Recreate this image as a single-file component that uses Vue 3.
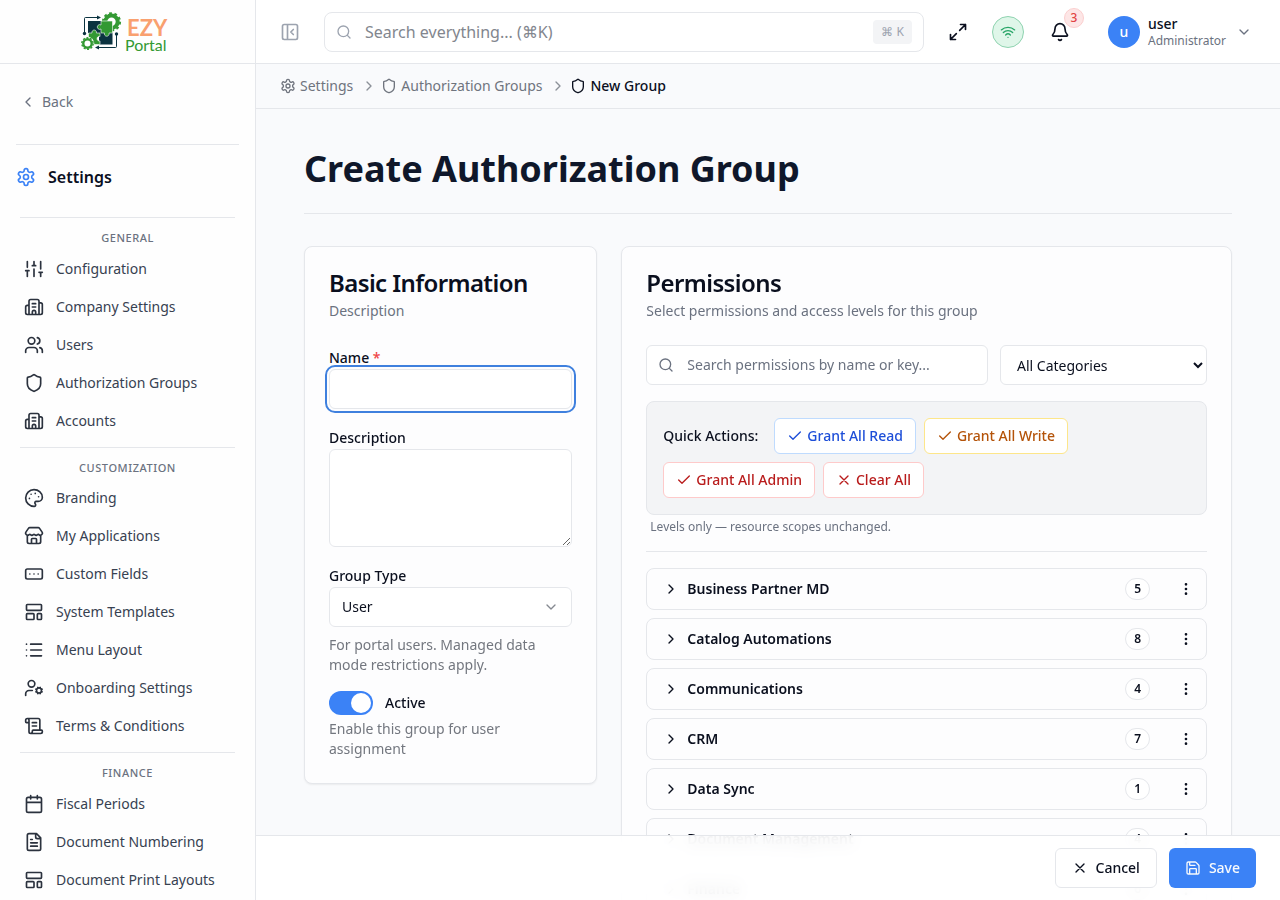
<template>
  <div class="shell">
    <aside class="sidebar">
      <a href="#" class="brand" aria-label="EZY Portal">
        <svg class="brand-logo" viewBox="80 10 90 44" width="90" height="44" aria-hidden="true">
          <g fill="none" stroke="#0b3340" stroke-width="1">
            <path d="M84.500 32V18.500a1 1 0 0 1 1-1H98" />
            <path d="M116.500 35V46.500a1 1 0 0 1-1 1H98" />
          </g>
          <path d="M97 15.500l4 2-4 2z M99 45.500l-4 2 4 2z" fill="#0b3340" />
          <circle cx="84.500" cy="33.500" r="1.700" fill="#0b3340" />
          <circle cx="116.500" cy="34" r="1.700" fill="#0b3340" />
          <rect x="88" y="21" width="13" height="12" fill="#0b3340" />
          <rect x="99" y="32" width="13.500" height="12.500" fill="#0b3340" />
          <circle cx="111.500" cy="21.800" r="6.200" fill="#fff" stroke="#339933" stroke-width="4" />
          <circle cx="111.500" cy="21.800" r="8.600" fill="none" stroke="#339933" stroke-width="2" stroke-dasharray="2.800 2.604" />
          <path
            d="M101 21h11.500v12h-3.500a2.400 2.400 0 1 1-4.500 0H101v-4a2.400 2.400 0 1 1 0-4z"
            fill="#339933"
            stroke="#fff"
            stroke-width="0.600"
          />
          <path
            d="M88.500 33h3.500a2.300 2.300 0 1 1 4.400 0H100v3.500a2.300 2.300 0 1 0 0 4.400V44.500H88.500z"
            fill="#339933"
            stroke="#fff"
            stroke-width="0.600"
          />
          <circle cx="87.500" cy="43.500" r="6.800" fill="#fff" />
          <circle cx="87.500" cy="43.500" r="4.200" fill="#fff" stroke="#339933" stroke-width="2.400" />
          <circle cx="87.500" cy="43.500" r="5.700" fill="none" stroke="#339933" stroke-width="1.400" stroke-dasharray="2 1.581" />
          <text x="127" y="36" class="logo-top">EZY</text>
          <text x="125" y="51" class="logo-bottom">Portal</text>
        </svg>
      </a>

      <div class="sidebar-body">
        <a href="#" class="back-link"><Icon name="chevronLeft" :size="16" />Back</a>

        <div class="module-title"><Icon name="settings" :size="20" />Settings</div>

        <nav class="nav" aria-label="Settings">
          <section v-for="section in sections" :key="section.title" class="nav-section">
            <h3 class="nav-heading">{{ section.title }}</h3>
            <a v-for="item in section.items" :key="item.label" href="#" class="nav-item">
              <Icon :name="item.icon" :size="20" />{{ item.label }}
            </a>
          </section>
        </nav>
      </div>
    </aside>

    <div class="content">
      <header class="topbar">
        <button class="icon-btn toggle" aria-label="Collapse sidebar"><Icon name="panel" :size="20" /></button>
        <label class="global-search">
          <Icon name="search" :size="16" />
          <input v-model="globalQuery" type="text" placeholder="Search everything... (⌘K)" aria-label="Search everything" />
          <kbd>⌘ K</kbd>
        </label>
        <div class="topbar-actions">
          <button class="icon-btn" aria-label="Full screen"><Icon name="maximize" :size="20" /></button>
          <button class="status-btn" aria-label="Online"><Icon name="wifi" :size="16" /></button>
          <button class="icon-btn bell" aria-label="Notifications">
            <Icon name="bell" :size="20" />
            <span class="bell-count">3</span>
          </button>
          <button class="user-menu">
            <span class="avatar">u</span>
            <span class="user-text">
              <span class="user-name">user</span>
              <span class="user-role">Administrator</span>
            </span>
            <Icon name="chevronDown" :size="16" />
          </button>
        </div>
      </header>

      <nav class="breadcrumb" aria-label="Breadcrumb">
        <a href="#" class="crumb"><Icon name="settings" :size="16" />Settings</a>
        <Icon name="chevronRight" :size="16" class="crumb-sep" />
        <a href="#" class="crumb"><Icon name="shield" :size="16" />Authorization Groups</a>
        <Icon name="chevronRight" :size="16" class="crumb-sep" />
        <span class="crumb current" aria-current="page"><Icon name="shield" :size="16" />New Group</span>
      </nav>

      <main class="page">
        <h1 class="page-title">Create Authorization Group</h1>

        <form id="group-form" class="columns" @submit.prevent>
          <section class="card basic">
            <h2>Basic Information</h2>
            <p class="card-desc">Description</p>

            <div class="fields">
              <div class="field">
                <label for="name">Name <span class="required">*</span></label>
                <input id="name" ref="nameInput" v-model="form.name" type="text" class="control" />
              </div>
              <div class="field">
                <label for="description">Description</label>
                <textarea id="description" v-model="form.description" class="control"></textarea>
              </div>
              <div class="field">
                <label for="type">Group Type</label>
                <div class="select-wrap">
                  <select id="type" v-model="form.type" class="control">
                    <option>User</option>
                    <option>Service</option>
                  </select>
                  <Icon name="chevronDown" :size="16" />
                </div>
                <p class="help">For portal users. Managed data mode restrictions apply.</p>
              </div>
              <div class="active-field">
                <label class="switch">
                  <input v-model="form.active" type="checkbox" role="switch" />
                  Active
                </label>
                <p>Enable this group for user assignment</p>
              </div>
            </div>
          </section>

          <section class="card permissions">
            <h2>Permissions</h2>
            <p class="card-desc">Select permissions and access levels for this group</p>

            <div class="filters">
              <label class="perm-search">
                <Icon name="search" :size="16" />
                <input v-model="query" type="text" placeholder="Search permissions by name or key..." aria-label="Search permissions" />
              </label>
              <select v-model="category" class="category" aria-label="Category">
                <option>All Categories</option>
                <option v-for="group in groups" :key="group.name">{{ group.name }}</option>
              </select>
            </div>

            <div class="quick">
              <span class="quick-label">Quick Actions:</span>
              <button type="button" class="quick-btn read"><Icon name="check" :size="16" />Grant All Read</button>
              <button type="button" class="quick-btn write"><Icon name="check" :size="16" />Grant All Write</button>
              <button type="button" class="quick-btn admin"><Icon name="check" :size="16" />Grant All Admin</button>
              <button type="button" class="quick-btn admin"><Icon name="x" :size="16" />Clear All</button>
            </div>
            <p class="quick-note">Levels only — resource scopes unchanged.</p>

            <ul class="groups">
              <li v-for="group in groups" :key="group.name" class="group">
                <button type="button" class="group-toggle">
                  <Icon name="chevronRight" :size="16" />
                  <span class="group-name">{{ group.name }}</span>
                  <span class="count">{{ group.count }}</span>
                </button>
                <button type="button" class="group-menu" :aria-label="`${group.name} options`">
                  <Icon name="dots" :size="16" />
                </button>
              </li>
            </ul>
          </section>
        </form>
      </main>

      <footer class="action-bar">
        <button type="button" class="btn"><Icon name="x" :size="16" />Cancel</button>
        <button type="submit" form="group-form" class="btn primary"><Icon name="save" :size="16" />Save</button>
      </footer>
    </div>
  </div>
</template>

<script setup>
import { h, onMounted, reactive, ref } from 'vue';

const icons = {
  settings:
    'M12.22 2h-.44a2 2 0 0 0-2 2v.18a2 2 0 0 1-1 1.73l-.43.25a2 2 0 0 1-2 0l-.15-.08a2 2 0 0 0-2.73.73l-.22.38a2 2 0 0 0 .73 2.73l.15.1a2 2 0 0 1 1 1.72v.51a2 2 0 0 1-1 1.74l-.15.09a2 2 0 0 0-.73 2.73l.22.38a2 2 0 0 0 2.73.73l.15-.08a2 2 0 0 1 2 0l.43.25a2 2 0 0 1 1 1.73V20a2 2 0 0 0 2 2h.44a2 2 0 0 0 2-2v-.18a2 2 0 0 1 1-1.73l.43-.25a2 2 0 0 1 2 0l.15.08a2 2 0 0 0 2.73-.73l.22-.39a2 2 0 0 0-.73-2.73l-.15-.08a2 2 0 0 1-1-1.74v-.5a2 2 0 0 1 1-1.74l.15-.09a2 2 0 0 0 .73-2.73l-.22-.38a2 2 0 0 0-2.73-.73l-.15.08a2 2 0 0 1-2 0l-.43-.25a2 2 0 0 1-1-1.73V4a2 2 0 0 0-2-2z M15 12a3 3 0 1 1-6 0 3 3 0 0 1 6 0z',
  sliders: 'M4 21v-7 M4 10V3 M12 21v-9 M12 8V3 M20 21v-5 M20 12V3 M2 14h4 M10 8h4 M18 16h4',
  building:
    'M10 12h4 M10 8h4 M14 21v-3a2 2 0 0 0-4 0v3 M6 10H4a2 2 0 0 0-2 2v7a2 2 0 0 0 2 2h16a2 2 0 0 0 2-2V9a2 2 0 0 0-2-2h-2 M6 21V5a2 2 0 0 1 2-2h8a2 2 0 0 1 2 2v16',
  users:
    'M16 21v-2a4 4 0 0 0-4-4H6a4 4 0 0 0-4 4v2 M13 7a4 4 0 1 1-8 0 4 4 0 0 1 8 0z M22 21v-2a4 4 0 0 0-3-3.87 M16 3.13a4 4 0 0 1 0 7.75',
  shield:
    'M20 13c0 5-3.5 7.5-7.66 8.95a1 1 0 0 1-.67-.01C7.5 20.5 4 18 4 13V6a1 1 0 0 1 1-1c2 0 4.5-1.2 6.24-2.72a1.17 1.17 0 0 1 1.52 0C14.51 3.81 17 5 19 5a1 1 0 0 1 1 1z',
  palette:
    'M12 22a1 1 0 0 1 0-20 10 9 0 0 1 10 9 5 5 0 0 1-5 5h-2.25a1.75 1.75 0 0 0-1.4 2.8l.3.4a1.75 1.75 0 0 1-1.4 2.8z M13.5 6.5h.01 M17.5 10.5h.01 M6.5 12.5h.01 M8.5 7.5h.01',
  store:
    'M15 21v-5a1 1 0 0 0-1-1h-4a1 1 0 0 0-1 1v5 M17.774 10.31a1.12 1.12 0 0 0-1.549 0 2.5 2.5 0 0 1-3.451 0 1.12 1.12 0 0 0-1.548 0 2.5 2.5 0 0 1-3.452 0 1.12 1.12 0 0 0-1.549 0 2.5 2.5 0 0 1-3.77-3.248l2.889-4.184A2 2 0 0 1 7 2h10a2 2 0 0 1 1.653.873l2.895 4.192a2.5 2.5 0 0 1-3.774 3.244 M4 10.95V19a2 2 0 0 0 2 2h12a2 2 0 0 0 2-2v-8.05',
  fields: 'M4 6h16a2 2 0 0 1 2 2v8a2 2 0 0 1-2 2H4a2 2 0 0 1-2-2V8a2 2 0 0 1 2-2z M12 12h.01 M17 12h.01 M7 12h.01',
  template:
    'M4 3h16a1 1 0 0 1 1 1v5a1 1 0 0 1-1 1H4a1 1 0 0 1-1-1V4a1 1 0 0 1 1-1z M4 14h7a1 1 0 0 1 1 1v5a1 1 0 0 1-1 1H4a1 1 0 0 1-1-1v-5a1 1 0 0 1 1-1z M17 14h3a1 1 0 0 1 1 1v5a1 1 0 0 1-1 1h-3a1 1 0 0 1-1-1v-5a1 1 0 0 1 1-1z',
  list: 'M3 5h.01 M3 12h.01 M3 19h.01 M8 5h13 M8 12h13 M8 19h13',
  userCog:
    'M10 15H6a4 4 0 0 0-4 4v2 M13 7a4 4 0 1 1-8 0 4 4 0 0 1 8 0z M21 15a3 3 0 1 1-6 0 3 3 0 0 1 6 0z M14.305 16.53l.923-.382 M15.228 13.852l-.923-.383 M16.852 12.228l-.383-.923 M16.852 17.772l-.383.924 M19.148 12.228l.383-.923 M19.53 18.696l-.382-.924 M20.772 13.852l.924-.383 M20.772 16.148l.924.383',
  scroll:
    'M15 12h-5 M15 8h-5 M19 17V5a2 2 0 0 0-2-2H4 M8 21h12a2 2 0 0 0 2-2v-1a1 1 0 0 0-1-1H11a1 1 0 0 0-1 1v1a2 2 0 1 1-4 0V5a2 2 0 1 0-4 0v2a1 1 0 0 0 1 1h3',
  calendar: 'M8 2v4 M16 2v4 M5 4h14a2 2 0 0 1 2 2v14a2 2 0 0 1-2 2H5a2 2 0 0 1-2-2V6a2 2 0 0 1 2-2z M3 10h18',
  file: 'M15 2H6a2 2 0 0 0-2 2v16a2 2 0 0 0 2 2h12a2 2 0 0 0 2-2V7Z M14 2v4a2 2 0 0 0 2 2h4 M10 9H8 M16 13H8 M16 17H8',
  panel: 'M5 3h14a2 2 0 0 1 2 2v14a2 2 0 0 1-2 2H5a2 2 0 0 1-2-2V5a2 2 0 0 1 2-2z M9 3v18 M16 15l-3-3 3-3',
  search: 'M19 11a8 8 0 1 1-16 0 8 8 0 0 1 16 0z M21 21l-4.3-4.3',
  maximize: 'M15 3h6v6 M21 3l-7 7 M3 21l7-7 M9 21H3v-6',
  wifi: 'M12 20h.01 M2 8.82a15 15 0 0 1 20 0 M5 12.859a10 10 0 0 1 14 0 M8.5 16.429a5 5 0 0 1 7 0',
  bell: 'M10.268 21a2 2 0 0 0 3.464 0 M3.262 15.326A1 1 0 0 0 4 17h16a1 1 0 0 0 .74-1.673C19.41 13.956 18 12.499 18 8A6 6 0 0 0 6 8c0 4.499-1.411 5.956-2.738 7.326',
  save: 'M15.2 3a2 2 0 0 1 1.4.6l3.8 3.8a2 2 0 0 1 .6 1.4V19a2 2 0 0 1-2 2H5a2 2 0 0 1-2-2V5a2 2 0 0 1 2-2z M17 21v-7a1 1 0 0 0-1-1H8a1 1 0 0 0-1 1v7 M7 3v4a1 1 0 0 0 1 1h7',
  dots: 'M13 12a1 1 0 1 1-2 0 1 1 0 0 1 2 0z M13 5a1 1 0 1 1-2 0 1 1 0 0 1 2 0z M13 19a1 1 0 1 1-2 0 1 1 0 0 1 2 0z',
  check: 'M20 6 9 17l-5-5',
  x: 'M18 6 6 18 M6 6l12 12',
  chevronLeft: 'M15 18l-6-6 6-6',
  chevronRight: 'M9 18l6-6-6-6',
  chevronDown: 'M6 9l6 6 6-6',
};

const Icon = (props) =>
  h(
    'svg',
    {
      class: 'icon',
      width: props.size,
      height: props.size,
      viewBox: '0 0 24 24',
      fill: 'none',
      stroke: 'currentColor',
      'stroke-width': 2,
      'stroke-linecap': 'round',
      'stroke-linejoin': 'round',
      'aria-hidden': 'true',
    },
    [h('path', { d: icons[props.name] })]
  );
Icon.props = ['name', 'size'];

const sections = [
  {
    title: 'General',
    items: [
      { label: 'Configuration', icon: 'sliders' },
      { label: 'Company Settings', icon: 'building' },
      { label: 'Users', icon: 'users' },
      { label: 'Authorization Groups', icon: 'shield' },
      { label: 'Accounts', icon: 'building' },
    ],
  },
  {
    title: 'Customization',
    items: [
      { label: 'Branding', icon: 'palette' },
      { label: 'My Applications', icon: 'store' },
      { label: 'Custom Fields', icon: 'fields' },
      { label: 'System Templates', icon: 'template' },
      { label: 'Menu Layout', icon: 'list' },
      { label: 'Onboarding Settings', icon: 'userCog' },
      { label: 'Terms & Conditions', icon: 'scroll' },
    ],
  },
  {
    title: 'Finance',
    items: [
      { label: 'Fiscal Periods', icon: 'calendar' },
      { label: 'Document Numbering', icon: 'file' },
      { label: 'Document Print Layouts', icon: 'template' },
    ],
  },
];

const groups = [
  { name: 'Business Partner MD', count: 5 },
  { name: 'Catalog Automations', count: 8 },
  { name: 'Communications', count: 4 },
  { name: 'CRM', count: 7 },
  { name: 'Data Sync', count: 1 },
  { name: 'Document Management', count: 4 },
  { name: 'Finance', count: 6 },
];

const globalQuery = ref('');
const query = ref('');
const category = ref('All Categories');
const nameInput = ref(null);

const form = reactive({
  name: '',
  description: '',
  type: 'User',
  active: true,
});

onMounted(() => nameInput.value.focus());
</script>

<style>
body {
  background: #f9fafc;
}
</style>

<style scoped>
* {
  box-sizing: border-box;
}

.shell {
  display: grid;
  grid-template-columns: 256px minmax(0, 1fr);
  height: 100vh;
  overflow: hidden;
  font-family: 'Noto Sans', sans-serif;
  font-size: 14px;
  line-height: 20px;
  color: #0a0f1e;
}

a {
  color: inherit;
  text-decoration: none;
}

button,
input,
select,
textarea {
  font: inherit;
  color: inherit;
}

button {
  padding: 0;
  border: none;
  background: none;
  cursor: pointer;
}

h1,
h2,
h3,
p,
ul {
  margin: 0;
  padding: 0;
}

.icon {
  flex-shrink: 0;
}

/* Sidebar */
.sidebar {
  display: flex;
  flex-direction: column;
  min-height: 0;
  background: #fefefe;
  border-right: 1px solid #e5e7eb;
}

.brand {
  display: flex;
  flex: 0 0 64px;
  align-items: center;
  justify-content: center;
  padding-right: 6px;
  border-bottom: 1px solid #e5e7eb;
}

.logo-top {
  font: 700 22px Lato, sans-serif;
  fill: #f9a06f;
}

.logo-bottom {
  font: 400 16px Lato, sans-serif;
  fill: #339933;
}

.sidebar-body {
  flex: 1;
  min-height: 0;
  padding: 16px 16px 0;
  overflow-y: auto;
  scrollbar-width: none;
}

.back-link {
  display: flex;
  align-items: center;
  gap: 6px;
  height: 44px;
  padding-left: 4px;
  color: #6b7280;
}

.module-title {
  display: flex;
  align-items: center;
  gap: 12px;
  margin-top: 20px;
  padding: 20px 0 28px;
  border-top: 1px solid #e5e7eb;
  font-size: 16px;
  font-weight: 600;
  line-height: 24px;
}

.module-title .icon {
  color: #3b82f6;
}

.nav {
  padding: 0 4px;
}

.nav-section {
  padding: 12px 0 7px;
  border-top: 1px solid #e5e7eb;
}

.nav-heading {
  padding-bottom: 3px;
  font-size: 11px;
  font-weight: 500;
  line-height: 1.5;
  letter-spacing: 0.05em;
  text-align: center;
  text-transform: uppercase;
  color: #6b7280;
}

.nav-item {
  display: flex;
  align-items: center;
  gap: 12px;
  height: 38px;
  padding-left: 4px;
  color: #374151;
}

.nav-item .icon {
  color: #2b323e;
}

/* Top bar */
.content {
  position: relative;
  display: flex;
  flex-direction: column;
  min-width: 0;
  min-height: 0;
}

.topbar {
  display: flex;
  flex: 0 0 64px;
  align-items: center;
  gap: 16px;
  padding: 0 16px;
  background: #fff;
  border-bottom: 1px solid #e5e7eb;
}

.icon-btn {
  display: flex;
  flex: 0 0 36px;
  align-items: center;
  justify-content: center;
  height: 36px;
}

.toggle {
  color: #9ca3af;
}

.global-search {
  display: flex;
  flex: 1;
  align-items: center;
  gap: 13px;
  max-width: 600px;
  height: 40px;
  padding: 0 11px;
  border: 1px solid #e5e7eb;
  border-radius: 8px;
  color: #9ca3af;
}

.global-search input,
.perm-search input {
  flex: 1;
  min-width: 0;
  padding: 0;
  border: none;
  outline: none;
  background: none;
  color: #0a0f1e;
}

.global-search input {
  font-size: 16px;
  line-height: 24px;
}

.global-search input::placeholder {
  color: #82868e;
}

.global-search kbd {
  padding: 4px 8px;
  border-radius: 4px;
  background: #f3f4f6;
  font-family: inherit;
  font-size: 12px;
  line-height: 16px;
}

.topbar-actions {
  display: flex;
  align-items: center;
  gap: 16px;
  margin-left: auto;
}

.status-btn {
  display: flex;
  align-items: center;
  justify-content: center;
  width: 32px;
  height: 32px;
  border: 1px solid #8fd3b0;
  border-radius: 50%;
  background: #dff6e9;
  color: #27a567;
}

.bell {
  position: relative;
  flex-basis: 40px;
}

.bell-count {
  position: absolute;
  top: -6px;
  right: -4px;
  width: 20px;
  height: 20px;
  border: 1px solid #fbcfcf;
  border-radius: 50%;
  background: #fde6e6;
  color: #e14343;
  font-size: 12px;
  font-weight: 500;
  line-height: 18px;
}

.user-menu {
  display: flex;
  align-items: center;
  gap: 8px;
  padding: 0 12px;
  text-align: left;
}

.user-menu .icon {
  color: #6b7280;
}

.avatar {
  width: 32px;
  height: 32px;
  border-radius: 50%;
  background: #3b82f6;
  color: #fff;
  font-weight: 500;
  line-height: 32px;
  text-align: center;
}

.user-text {
  display: flex;
  flex-direction: column;
  min-width: 80px;
}

.user-name {
  font-weight: 500;
  line-height: 18px;
}

.user-role {
  color: #6b7280;
  font-size: 12px;
  line-height: 16px;
}

.breadcrumb {
  display: flex;
  flex: 0 0 45px;
  align-items: center;
  padding: 0 24px;
  background: #f9fafc;
  border-bottom: 1px solid #e5e7eb;
  color: #6f747e;
}

.crumb {
  display: flex;
  align-items: center;
  gap: 4px;
}

.crumb.current {
  color: #0a0f1e;
  font-weight: 500;
}

.crumb-sep {
  margin: 0 4px 0 8px;
  color: #8b9098;
}

/* Page */
.page {
  flex: 1;
  min-height: 0;
  padding: 32px 48px 96px;
  overflow-y: auto;
  scrollbar-width: none;
}

.page-title {
  padding: 8px 0 24px;
  border-bottom: 1px solid #e5e7eb;
  font-size: 36px;
  font-weight: 700;
  line-height: 40px;
  color: #0f172a;
}

.columns {
  display: grid;
  grid-template-columns: repeat(3, minmax(0, 1fr));
  align-items: start;
  gap: 24px;
  margin-top: 32px;
}

.card {
  padding: 24px;
  border: 1px solid #e5e7eb;
  border-radius: 8px;
  background: #fdfdfe;
  box-shadow: 0 1px 2px rgba(0, 0, 0, 0.06);
}

.permissions {
  grid-column: span 2;
}

.card h2 {
  font-size: 24px;
  font-weight: 600;
  line-height: 24px;
  letter-spacing: -0.025em;
}

.card-desc {
  margin-top: 6px;
  color: #6b7280;
}

.fields {
  display: flex;
  flex-direction: column;
  gap: 16px;
  margin-top: 24px;
}

.field label {
  display: block;
  padding-top: 2px;
  font-weight: 500;
  line-height: 22px;
}

.required {
  color: #ef4444;
}

.control {
  display: block;
  width: 100%;
  height: 40px;
  padding: 8px 12px;
  border: 1px solid #e5e7eb;
  border-radius: 6px;
  background: #fff;
}

.control:focus {
  outline: 2px solid #3f80de;
  outline-offset: 2px;
}

textarea.control {
  height: 98px;
  resize: vertical;
}

.select-wrap {
  position: relative;
}

.select-wrap .control {
  appearance: none;
}

.select-wrap .icon {
  position: absolute;
  top: 12px;
  right: 13px;
  color: #858990;
  pointer-events: none;
}

.help {
  margin-top: 8px;
  color: #73777f;
}

.active-field p {
  margin-top: 4px;
  color: #73777f;
}

.switch {
  display: flex;
  align-items: center;
  gap: 12px;
  font-weight: 500;
}

.switch input {
  appearance: none;
  width: 44px;
  height: 24px;
  margin: 0;
  padding: 2px;
  border-radius: 12px;
  background: #d1d5db;
  cursor: pointer;
}

.switch input::before {
  content: '';
  display: block;
  width: 20px;
  height: 20px;
  border-radius: 50%;
  background: #fff;
}

.switch input:checked {
  background: #3b82f6;
}

.switch input:checked::before {
  margin-left: auto;
}

/* Permissions */
.filters {
  display: flex;
  gap: 12px;
  margin-top: 24px;
}

.perm-search {
  display: flex;
  flex: 1;
  align-items: center;
  gap: 13px;
  height: 40px;
  padding: 0 11px;
  border: 1px solid #e5e7eb;
  border-radius: 6px;
  background: #fff;
  color: #6b7280;
}

.perm-search input::placeholder {
  color: #6b7280;
}

.category {
  width: 207px;
  height: 40px;
  padding: 0 12px;
  border: 1px solid #e5e7eb;
  border-radius: 6px;
  background: #fff;
}

.quick {
  display: flex;
  flex-wrap: wrap;
  align-items: center;
  gap: 8px;
  margin-top: 16px;
  padding: 16px;
  border: 1px solid #e5e7eb;
  border-radius: 8px;
  background: #f3f4f6;
}

.quick-label {
  margin-right: 8px;
  font-weight: 500;
}

.quick-btn {
  display: flex;
  align-items: center;
  gap: 4px;
  height: 36px;
  padding: 0 12px;
  border: 1px solid;
  border-radius: 6px;
  background: #fff;
  font-weight: 500;
}

.quick-btn.read {
  border-color: #bfdbfe;
  color: #1d4ed8;
}

.quick-btn.write {
  border-color: #fde68a;
  color: #b45309;
}

.quick-btn.admin {
  border-color: #fecaca;
  color: #b91c1c;
}

.quick-note {
  padding: 4px 4px 16px;
  color: #6b7280;
  font-size: 12px;
  line-height: 16px;
}

.groups {
  display: flex;
  flex-direction: column;
  gap: 8px;
  padding-top: 16px;
  border-top: 1px solid #e5e7eb;
  list-style: none;
}

.group {
  display: flex;
  align-items: center;
  gap: 20px;
  height: 42px;
  padding: 0 4px 0 16px;
  border: 1px solid #e5e7eb;
  border-radius: 8px;
}

.group-toggle {
  display: flex;
  flex: 1;
  align-items: center;
  gap: 8px;
  font-weight: 600;
  text-align: left;
}

.group-name {
  flex: 1;
}

.count {
  padding: 2px 8px;
  border: 1px solid #e5e7eb;
  border-radius: 12px;
  background: #fff;
  font-size: 12px;
  line-height: 16px;
}

.group-menu {
  display: flex;
  align-items: center;
  justify-content: center;
  width: 32px;
  height: 32px;
}

/* Stays over the scrolled page */
.action-bar {
  position: absolute;
  right: 0;
  bottom: 0;
  left: 0;
  display: flex;
  justify-content: flex-end;
  gap: 12px;
  padding: 12px 24px;
  border-top: 1px solid #e5e7eb;
  background: rgba(255, 255, 255, 0.9);
  backdrop-filter: blur(8px);
}

.btn {
  display: flex;
  align-items: center;
  gap: 8px;
  height: 40px;
  padding: 0 16px;
  border: 1px solid #e5e7eb;
  border-radius: 6px;
  background: #fff;
  font-weight: 500;
}

.btn.primary {
  border: none;
  background: #3b82f6;
  color: #f8fafc;
}
</style>
